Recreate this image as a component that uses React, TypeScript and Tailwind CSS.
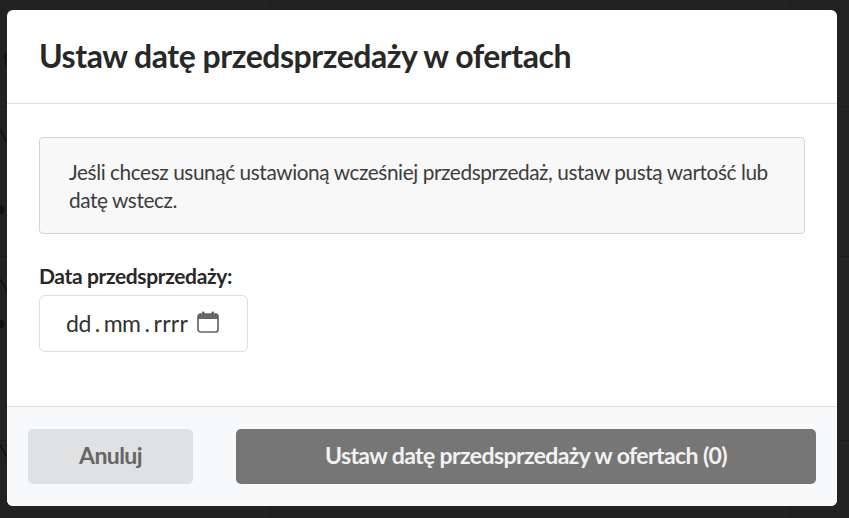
export default function App() {
  return (
    <div className="relative h-[518px] w-[849px] overflow-hidden bg-[#222222] pt-[10px] pl-[7px] font-['Lato','Liberation_Sans',sans-serif]">
      <svg className="absolute top-0 left-0" width="849" height="518" viewBox="0 0 849 518" fill="none">
        <g stroke="#1c1c1c" strokeWidth="1">
          <path d="M0 106.5H849M0 256.5H849M0 440.5H849M270.5 0V518M790.5 0V518" />
        </g>
        <g stroke="#111111" strokeWidth="1.5">
          <path d="M0 130L7 142M0 279L7 291M0 445L7 457" />
        </g>
        <circle cx="0" cy="210" r="4.5" fill="#111111" />
        <circle cx="0" cy="324" r="4.5" fill="#111111" />
        <path d="M3 57L5.5 55V66" stroke="#111111" strokeWidth="1.2" />
      </svg>
      <div className="relative flex h-[496px] w-[830px] flex-col overflow-hidden rounded-[6px] bg-white">
        <div className="flex h-[94px] shrink-0 items-center border-b border-[#dedede] pb-[2px] pl-[32px]">
          <h1 className="text-[32px] leading-none font-bold tracking-[-0.47px] text-[#282828]">Ustaw datę przedsprzedaży w ofertach</h1>
        </div>
        <div className="flex-1 px-[32px] pt-[33px]">
          <div className="h-[97px] w-[766px] rounded-[4px] border border-[#d4d4d5] bg-[#f8f8f9] pt-[20px] pr-[30px] pl-[29px] text-[20.8px] leading-[28px] tracking-[-0.42px] text-[#3d3d3d]">
            Jeśli chcesz usunąć ustawioną wcześniej przedsprzedaż, ustaw pustą wartość lub datę wstecz.
          </div>
          <div className="mt-[28px] text-[21px] leading-[28px] font-bold tracking-[-0.38px] text-[#282828]">Data przedsprzedaży:</div>
          <div className="mt-[5px] flex h-[57px] w-[209px] items-center rounded-[6px] border border-[#dedede] pl-[26px] text-[23px] tracking-[-0.5px] text-[#333333]">
            <span className="whitespace-pre">dd</span>
            <span className="ml-[4px] whitespace-pre">.</span>
            <span className="ml-[4px] whitespace-pre">mm</span>
            <span className="ml-[4px] whitespace-pre">.</span>
            <span className="ml-[4px] whitespace-pre tracking-[0.3px]">rrrr</span>
            <svg className="mb-[3px] ml-[9px]" width="22" height="22" viewBox="0 0 22 22" fill="none">
              <path d="M1 5.5C1 4 2 3 3.5 3H18.5C20 3 21 4 21 5.5V8H1V5.5Z" fill="#666666" />
              <rect x="5" y="0.5" width="2.5" height="4" rx="1" fill="#666666" />
              <rect x="14.5" y="0.5" width="2.5" height="4" rx="1" fill="#666666" />
              <rect x="1" y="3" width="20" height="18" rx="2.5" stroke="#666666" strokeWidth="1.7" />
            </svg>
          </div>
        </div>
        <div className="flex h-[100px] shrink-0 items-center gap-[43px] border-t border-[#dedede] bg-[#f8f9fb] px-[21px]">
          <button className="h-[55px] w-[165px] rounded-[5px] bg-[#e0e1e2] pb-[2px] text-[23px] font-bold tracking-[-0.6px] text-[#666666]">Anuluj</button>
          <button className="h-[55px] flex-1 rounded-[5px] bg-[#767676] pb-[2px] text-[23px] font-bold tracking-[-0.6px] text-[#f2f2f2]">Ustaw datę przedsprzedaży w ofertach (0)</button>
        </div>
      </div>
    </div>
  );
}
